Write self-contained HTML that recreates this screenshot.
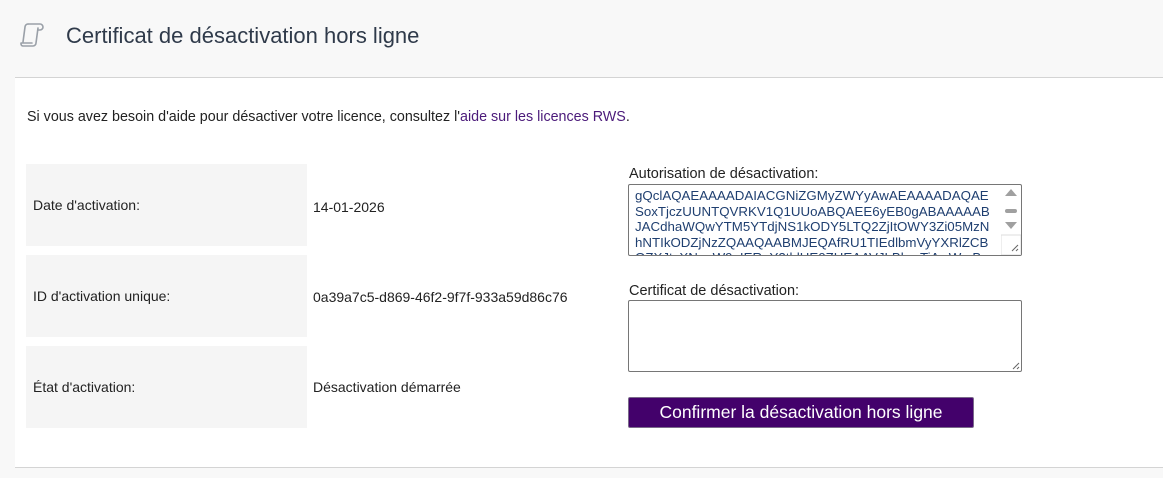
<!DOCTYPE html>
<html><head><meta charset="utf-8"><style>
body{margin:0;width:1163px;height:478px;background:#f8f8f8;font-family:"Liberation Sans",sans-serif;overflow:hidden;position:relative}
.abs{position:absolute}
.title{left:66px;top:23px;font-size:22px;color:#2f3a4a}
.panel{left:15px;top:77px;width:1148px;height:389px;background:#fff;border-top:1px solid #d4d4d4;border-bottom:1px solid #d4d4d4}
.intro{left:27px;top:109px;font-size:14.3px;color:#222}
.intro a{color:#4b1a7a;text-decoration:none}
.cell{left:26px;width:281px;height:82px;background:#f5f5f5;font-size:14px;color:#222;line-height:82px;padding-left:7px;box-sizing:border-box}
.val{left:313px;font-size:14px;color:#222}
.lbl{left:629px;font-size:14.5px;color:#222}
.ta{left:628px;width:394px;height:72px;border:1px solid #767676;border-radius:2px;box-sizing:border-box;background:#fff;overflow:hidden}
.code{position:absolute;left:6px;top:3px;font-family:Arial,"Liberation Sans",sans-serif;font-size:13.3px;line-height:15.5px;color:#1f3f70;white-space:pre}
.btn{left:628px;top:397px;width:346px;height:31px;background:#43016b;border:1px solid #7a6a8a;border-radius:2px;box-sizing:border-box;color:#fff;font-family:Arial,"Liberation Sans",sans-serif;font-size:17.5px;text-align:center;line-height:29px}
</style></head><body>
<svg class="abs" style="left:19px;top:22px" width="26" height="28" viewBox="0 0 26 28" fill="none" stroke="#9aa0a8" stroke-width="1.6" stroke-linecap="round" stroke-linejoin="round"><path d="M9 2h12a3 3 0 0 1 0 6h-2"/><path d="M9 2a3 3 0 0 0-3 3l-2 15"/><path d="M19 6l-2 15a3 3 0 0 1-3 3H4a2 2 0 0 1-2-2v-1h11"/></svg>
<div class="abs title">Certificat de désactivation hors ligne</div>
<div class="abs panel"></div>
<div class="abs intro">Si vous avez besoin d'aide pour désactiver votre licence, consultez l'<a>aide sur les licences RWS</a>.</div>
<div class="abs cell" style="top:164px">Date d'activation:</div>
<div class="abs cell" style="top:255px">ID d'activation unique:</div>
<div class="abs cell" style="top:346px">État d'activation:</div>
<div class="abs val" style="top:199px">14-01-2026</div>
<div class="abs val" style="top:289px">0a39a7c5-d869-46f2-9f7f-933a59d86c76</div>
<div class="abs val" style="top:379px">Désactivation démarrée</div>
<div class="abs lbl" style="top:166px">Autorisation de désactivation:</div>
<div class="abs ta" style="top:184px"><div class="code">gQclAQAEAAAADAIACGNiZGMyZWYyAwAEAAAADAQAE
SoxTjczUUNTQVRKV1Q1UUoABQAEE6yEB0gABAAAAAB
JACdhaWQwYTM5YTdjNS1kODY5LTQ2ZjItOWY3Zi05MzN
hNTIkODZjNzZQAAQAABMJEQAfRU1TIEdlbmVyYXRlZCB
OZXJtcXNnaW9uIERpY2tldHE0ZHEAAVJLBlcwTiAwWmB</div>
<svg style="position:absolute;right:0;top:0" width="20" height="70"><polygon points="4,11 10,4 16,11" fill="#a0a0a0"/><rect x="4" y="24" width="12" height="4" rx="2" fill="#a0a0a0"/><polygon points="4,37 10,44 16,37" fill="#a0a0a0"/><rect x="0" y="50" width="20" height="20" fill="#fff" stroke="#ddd"/><path d="M17 60l-6 6M17 64l-2 2" stroke="#666"/></svg></div>
<div class="abs lbl" style="top:283px">Certificat de désactivation:</div>
<div class="abs ta" style="top:300px"><svg style="position:absolute;right:1px;bottom:1px" width="10" height="10"><path d="M9 3l-6 6M9 7l-2 2" stroke="#666"/></svg></div>
<div class="abs btn">Confirmer la désactivation hors ligne</div>
</body></html>
